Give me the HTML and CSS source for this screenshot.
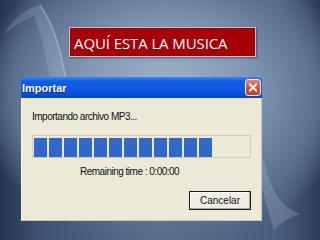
FILE: index.html
```html
<!DOCTYPE html>
<html lang="es">
<head>
    <meta charset="UTF-8">
    <title>Aquí esta la musica</title>
    <link rel="stylesheet" href="styles.css">
</head>
<body>
    <div class="slide">
        <svg class="backdrop" width="320" height="240" viewBox="0 0 320 240">
            <path d="M4 34 C14 18 26 8 40 5 C52 22 60 44 66 80 L50 80 C46 52 40 32 34 16 C24 20 14 26 4 34 Z" fill="rgba(200,215,235,0.18)"/>
            <path d="M40 5 C52 22 60 44 66 80" stroke="rgba(215,228,245,0.35)" stroke-width="1.5" fill="none"/>
            <path d="M264 160 C270 185 276 205 300 214 C290 218 280 222 274 230 C268 210 262 190 258 170 Z" fill="rgba(190,205,225,0.22)"/>
        </svg>

        <div class="title"><h1>AQUÍ ESTA LA MUSICA</h1></div>

        <div class="dialog">
            <div class="titlebar">
                <span>Importar</span>
                <div class="close">
                    <svg width="15" height="15" viewBox="0 0 15 15">
                        <path d="M4 4 L11 11 M11 4 L4 11" stroke="white" stroke-width="2" stroke-linecap="round"/>
                    </svg>
                </div>
            </div>
            <div class="body">
                <p class="status">Importando archivo MP3...</p>
                <div class="progress">
                    <div class="block"></div><div class="block"></div><div class="block"></div>
                    <div class="block"></div><div class="block"></div><div class="block"></div>
                    <div class="block"></div><div class="block"></div><div class="block"></div>
                    <div class="block"></div><div class="block"></div><div class="block"></div>
                </div>
                <p class="remaining">Remaining time : 0:00:00</p>
                <div class="actions">
                    <button class="cancel">Cancelar</button>
                </div>
            </div>
        </div>
    </div>
</body>
</html>
```

FILE: styles.css
```css
* {
    box-sizing: border-box;
    margin: 0;
    padding: 0;
}

body {
    width: 320px;
    height: 240px;
    overflow: hidden;
    font-family: 'Liberation Sans', Arial, sans-serif;
}

.slide {
    position: relative;
    width: 320px;
    height: 240px;
    padding-top: 27px;
    background:
        radial-gradient(ellipse 190px 150px at 165px 95px, #a2b5cc 0%, #8198b4 45%, #5c718e 80%, rgba(60,78,105,0) 100%),
        linear-gradient(90deg, #253451 0%, #3f5272 12%, #5a6e8c 50%, #4a5d7c 88%, #2c3b57 100%);
}

.backdrop {
    position: absolute;
    left: 0;
    top: 0;
}

.title {
    position: relative;
    width: 187px;
    height: 30px;
    margin-left: 69px;
    background: #a50005;
    border: 1px solid #d9b9bd;
    box-shadow: 1px 1px 2px rgba(20, 30, 50, 0.5);
    padding: 7px 0 0 4px;
}

.title h1 {
    font-family: 'Open Sans', sans-serif;
    font-weight: 400;
    font-size: 15px;
    line-height: 16px;
    color: white;
    letter-spacing: -0.1px;
}

.dialog {
    position: relative;
    width: 241px;
    margin: 20px 0 0 21px;
}

.titlebar {
    height: 21px;
    display: flex;
    align-items: center;
    justify-content: space-between;
    padding: 0 1px 0 1px;
    background: linear-gradient(180deg, #3d86f5 0%, #0f5ee8 20%, #0a55e0 70%, #0748c8 100%);
    border-radius: 3px 3px 0 0;
}

.titlebar span {
    color: white;
    font-family: 'Liberation Sans', Arial, sans-serif;
    font-weight: bold;
    font-size: 11px;
    text-shadow: 1px 1px 0 #0a2a88;
}

.close {
    width: 16px;
    height: 17px;
    border: 1px solid #f4e8e4;
    border-radius: 3px;
    background: linear-gradient(180deg, #e8846a 0%, #d6502e 55%, #c64020 100%);
    display: flex;
    align-items: center;
    justify-content: center;
}

.body {
    height: 123px;
    background: #ece9d8;
    border-left: 1px solid #f7f6ef;
    border-right: 1px solid #c9c6b8;
    border-bottom: 1px solid #c9c6b8;
    padding: 13px 10px 0 10px;
}

.status {
    font-size: 10px;
    line-height: 12px;
    color: #111;
    letter-spacing: -0.5px;
}

.progress {
    width: 219px;
    height: 23px;
    margin-top: 12px;
    border: 1px solid #cfccbf;
    background: #ece9d8;
    display: flex;
    gap: 2px;
    padding: 2px 0 0 1px;
}

.block {
    width: 13px;
    height: 19px;
    background: #2f68c8;
}

.remaining {
    margin: 8px 0 0 48px;
    font-size: 10px;
    line-height: 12px;
    color: #111;
    letter-spacing: -0.5px;
}

.actions {
    display: flex;
    justify-content: flex-end;
    margin-top: 13px;
}

.cancel {
    width: 62px;
    height: 19px;
    background: #efede4;
    border: 1px solid #1c1c1c;
    box-shadow: inset -1px -1px 0 #a9a69a, inset 1px 1px 0 #ffffff;
    font-family: 'Liberation Sans', Arial, sans-serif;
    font-size: 10px;
    color: #111;
}
```
